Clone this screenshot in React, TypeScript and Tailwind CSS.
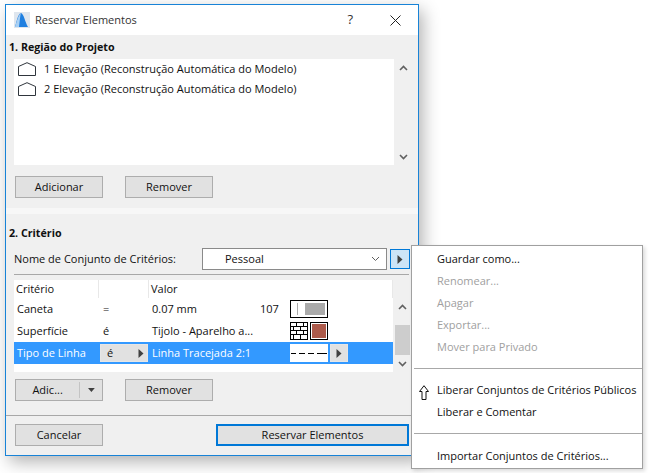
import React from 'react';

const font = { fontFamily: '"Open Sans", "Noto Sans", sans-serif' };

const Tri = ({ className = '' }: { className?: string }) => (
  <svg width="6" height="9" viewBox="0 0 6 9" className={className}>
    <path d="M0.5 0 L5.5 4.5 L0.5 9 Z" fill="#404040" />
  </svg>
);

const Chevron = ({ up = false, className = '' }: { up?: boolean; className?: string }) => (
  <svg width="9" height="6" viewBox="0 0 9 6" className={className}>
    <path d={up ? 'M1 5 L4.5 1.5 L8 5' : 'M1 1 L4.5 4.5 L8 1'} fill="none" stroke="#606060" strokeWidth="1.6" />
  </svg>
);

const ElevationIcon = () => (
  <svg width="18" height="14" viewBox="0 0 18 14" className="shrink-0">
    <path d="M0.5 13.5 V4.5 L9 0.7 L17.5 4.5 V13.5 Z" fill="none" stroke="#2f353c" strokeWidth="1" />
  </svg>
);

const Btn = ({ children, className = 'w-[88px]' }: { children: React.ReactNode; className?: string }) => (
  <div className={`h-[22px] border border-[#adadad] bg-[#e1e1e1] flex items-center justify-center text-[11px] text-[#111] ${className}`}>
    {children}
  </div>
);

const ListRow = ({ label }: { label: string }) => (
  <div className="h-5 flex items-center pl-[4px] gap-[8px] text-[11px] text-[#111]">
    <ElevationIcon />
    <span>{label}</span>
  </div>
);

const Brick = () => (
  <svg width="18" height="18" viewBox="0 0 18 18">
    <rect x="0.5" y="0.5" width="17" height="17" fill="#fff" stroke="#000" />
    <path d="M0 4.5 H18 M0 8.5 H18 M0 12.5 H18 M6.5 0 V4 M13.5 0 V4 M3.5 5 V8 M10.5 5 V8 M6.5 9 V12 M13.5 9 V12 M3.5 13 V17 M10.5 13 V17" stroke="#000" fill="none" />
  </svg>
);

const MenuItem = ({ children, off }: { children: React.ReactNode; off?: boolean }) => (
  <div className={`h-[22px] flex items-center pl-[25px] text-[11px] whitespace-nowrap ${off ? 'text-[#a0a0a0]' : 'text-[#111]'}`}>{children}</div>
);

const Sep = () => <div className="h-px bg-[#a8a8a8] ml-[2px] my-[10px]" />;

const App: React.FC = () => {
  return (
    <div className="relative w-[649px] h-[473px] bg-white overflow-hidden" style={font}>
      {/* dialog window */}
      <div className="absolute left-[5px] top-[4px] w-[414px] h-[452px] border border-[#1883d7] bg-[#f0f0f0] flex flex-col shadow-[4px_6px_16px_rgba(0,0,0,0.3)]">
        <div className="h-[30px] bg-white flex items-center shrink-0">
          <svg width="16" height="16" viewBox="0 0 16 16" className="ml-[8px]">
            <rect width="16" height="16" fill="#dfe6ee" />
            <path d="M1 15 C3 8 4 2 7 1 C10 2 11 10 14 15 Z" fill="#1f7fe0" />
            <path d="M5 15 C6 8 6 4 7 1 C5 2 3 8 1 15 Z" fill="#a8d0f4" />
          </svg>
          <span className="ml-[5px] text-[11px] text-[#333]">Reservar Elementos</span>
          <span className="ml-auto text-[13px] text-[#333] mr-[37px]">?</span>
          <svg width="11" height="11" viewBox="0 0 11 11" className="mr-[17px]">
            <path d="M0.5 0.5 L10.5 10.5 M10.5 0.5 L0.5 10.5" stroke="#222" strokeWidth="1" />
          </svg>
        </div>

        <div className="h-[179px] shrink-0 px-[3px] pt-[3px] border-b-[6px] border-[#f7f7f7]">
          <div className="text-[10.7px] font-bold text-[#111] h-[19px] flex items-center">1. Região do Projeto</div>
          <div className="ml-[5px] mt-[2px] flex h-[106px]">
            <div className="w-[380px] bg-white">
              <ListRow label="1 Elevação (Reconstrução Automática do Modelo)" />
              <ListRow label="2 Elevação (Reconstrução Automática do Modelo)" />
            </div>
            <div className="w-[16px] ml-px flex flex-col items-center justify-between pt-[6px] pb-[5px]">
              <Chevron up />
              <Chevron />
            </div>
          </div>
          <div className="ml-[6px] mt-[11px] flex gap-[22px]">
            <Btn>Adicionar</Btn>
            <Btn>Remover</Btn>
          </div>
        </div>

        <div className="px-[3px] flex-1 flex flex-col">
          <div className="text-[10.7px] font-bold text-[#111] h-[19px] flex items-center mt-[10px]">2. Critério</div>
          <div className="flex items-center ml-[5px] mt-[5px] h-[22px]">
            <span className="text-[11px] text-[#111] w-[188px]">Nome de Conjunto de Critérios:</span>
            <div className="w-[185px] h-[22px] border border-[#8a8a8a] bg-white flex items-center pl-[22px] text-[11px] text-[#111]">
              Pessoal
              <svg width="9" height="6" viewBox="0 0 9 6" className="ml-auto mr-[6px]">
                <path d="M1 1 L4.5 4.5 L8 1" fill="none" stroke="#606060" />
              </svg>
            </div>
            <div className="ml-[3px] w-[20px] h-[20px] border border-[#0078d7] bg-[#cce4f7] flex items-center justify-center">
              <Tri />
            </div>
          </div>
          <div className="h-px bg-[#a8a8a8] ml-[5px] mt-[4px] mr-[6px]" />

          <div className="ml-[5px] mt-[5px] flex h-[92px]">
            <div className="w-[379px] bg-white flex flex-col text-[11px] text-[#111]">
              <div className="h-[18px] flex items-center shrink-0 bg-white">
                <span className="w-[85px] pl-[2px] border-r border-[#e8e8e8] h-full flex items-center">Critério</span>
                <span className="w-[50px] border-r border-[#e8e8e8] h-full" />
                <span className="pl-[2px] flex-1 border-r border-[#e8e8e8] h-full flex items-center">Valor</span>
              </div>
              <div className="h-[22px] flex items-center">
                <span className="w-[86px] pl-[3px]">Caneta</span>
                <span className="w-[50px] pl-[3px]">=</span>
                <span className="pl-[2px] w-[110px]">0.07 mm</span>
                <span className="w-[30px]">107</span>
                <div className="w-[38px] h-[18px] border border-black bg-white flex items-center pl-[6px] gap-[7px]">
                  <div className="w-px h-[12px] bg-[#aaa]" />
                  <div className="w-[20px] h-[12px] bg-[#aaa]" />
                </div>
              </div>
              <div className="h-[22px] flex items-center">
                <span className="w-[86px] pl-[3px]">Superfície</span>
                <span className="w-[50px] pl-[3px]">é</span>
                <span className="pl-[2px] w-[140px]">Tijolo - Aparelho a...</span>
                <Brick />
                <div className="ml-[2px] w-[18px] h-[18px] border border-black bg-white flex items-center justify-center">
                  <div className="w-[14px] h-[14px] bg-[#ad5a4a]" />
                </div>
              </div>
              <div className="h-[22px] flex items-center bg-[#3399ff] text-white">
                <span className="w-[86px] pl-[3px]">Tipo de Linha</span>
                <div className="w-[48px] h-[18px] border border-[#e6e6e6] bg-[#e1e1e1] text-[#111] flex items-center pl-[6px] pr-[3px] mr-[2px]">
                  é
                  <Tri className="ml-auto" />
                </div>
                <span className="pl-[2px] w-[140px]">Linha Tracejada 2:1</span>
                <div className="w-[38px] h-[18px] bg-white flex items-center justify-center">
                  <svg width="38" height="1" viewBox="0 0 38 1">
                    <path d="M1 0.5 H6 M9 0.5 H15 M18 0.5 H24 M27 0.5 H37" stroke="#000" strokeWidth="1" />
                  </svg>
                </div>
                <div className="ml-[2px] w-[18px] h-[18px] border border-[#e6e6e6] bg-[#e1e1e1] flex items-center justify-center">
                  <Tri />
                </div>
              </div>
            </div>
            <div className="w-[16px] ml-px flex flex-col items-center pt-[24px]">
              <Chevron up />
              <div className="w-[15px] h-[30px] bg-[#cdcdcd] mt-[15px]" />
              <Chevron className="mt-[6px]" />
            </div>
          </div>

          <div className="ml-[6px] mt-[7px] flex gap-[22px]">
            <Btn>
              <span className="w-[65px] text-center">Adic...</span>
              <span className="w-px h-[16px] bg-[#c4c4c4]" />
              <svg width="7" height="4" viewBox="0 0 7 4" className="mx-[7.5px]">
                <path d="M0 0 H7 L3.5 4 Z" fill="#404040" />
              </svg>
            </Btn>
            <Btn>Remover</Btn>
          </div>
          <div className="h-px bg-[#a8a8a8] -mx-[3px] mt-[14px]" />
          <div className="ml-[6px] mt-[8px] flex justify-between mr-[6px]">
            <Btn>Cancelar</Btn>
            <Btn className="w-[193px] !border-2 !border-[#0078d7]">Reservar Elementos</Btn>
          </div>
        </div>
      </div>

      {/* popup menu */}
      <div className="absolute left-[411px] top-[245px] w-[232px] h-[224px] border border-[#a0a0a0] bg-white pt-[2px] shadow-[2px_2px_4px_rgba(0,0,0,0.15)]">
        <MenuItem>Guardar como...</MenuItem>
        <MenuItem off>Renomear...</MenuItem>
        <MenuItem off>Apagar</MenuItem>
        <MenuItem off>Exportar...</MenuItem>
        <MenuItem off>Mover para Privado</MenuItem>
        <Sep />
        <div className="relative mt-[1px]">
          <svg width="10" height="15" viewBox="0 0 10 15" className="absolute left-[7px] top-[6px]">
            <path d="M5 0.7 L9.5 6.5 H7 V14.5 H3 V6.5 H0.5 Z" fill="none" stroke="#111" strokeWidth="1" />
          </svg>
          <MenuItem>Liberar Conjuntos de Critérios Públicos</MenuItem>
        </div>
        <MenuItem>Liberar e Comentar</MenuItem>
        <Sep />
        <div className="h-px" />
        <MenuItem>Importar Conjuntos de Critérios...</MenuItem>
      </div>
    </div>
  );
};

export default App;
